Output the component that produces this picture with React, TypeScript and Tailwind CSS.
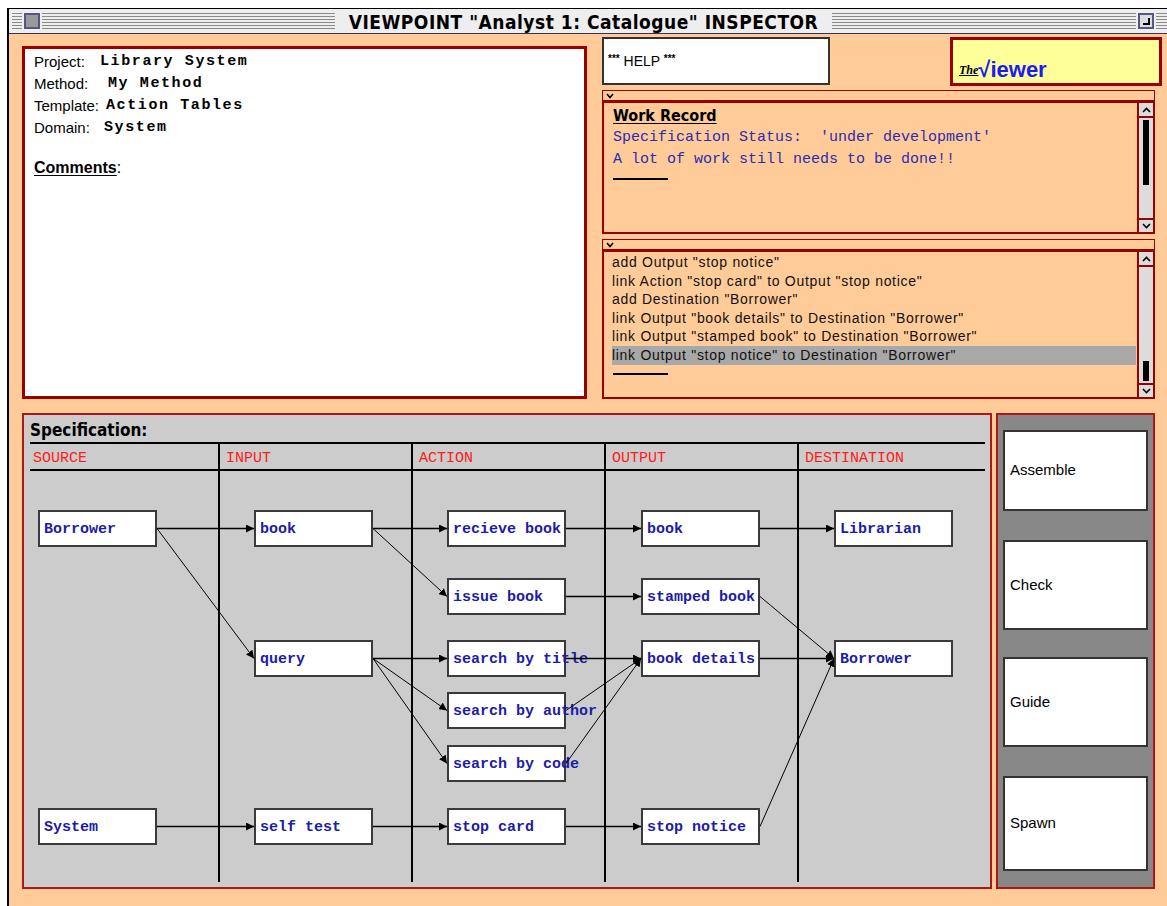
import React from "react";

const sans = "font-['Liberation_Sans',sans-serif]";
const mono = "font-['Liberation_Mono',monospace]";
const chicago = "font-['DejaVu_Sans_Condensed','Liberation_Sans_Narrow',sans-serif]";
const stripes =
  "bg-[repeating-linear-gradient(to_bottom,#8a8a8a_0px,#8a8a8a_1px,#eeeeee_1px,#eeeeee_3px)]";

type Node = { id: string; t: string; c: number; y: number };

const colX = [8, 224, 417, 611, 804];
const NW = 119;
const NH = 37;

const nodes: Node[] = [
  { id: "src1", t: "Borrower", c: 0, y: 68 },
  { id: "in1", t: "book", c: 1, y: 68 },
  { id: "a1", t: "recieve book", c: 2, y: 68 },
  { id: "o1", t: "book", c: 3, y: 68 },
  { id: "d1", t: "Librarian", c: 4, y: 68 },
  { id: "a2", t: "issue book", c: 2, y: 136 },
  { id: "o2", t: "stamped book", c: 3, y: 136 },
  { id: "in2", t: "query", c: 1, y: 198 },
  { id: "a3", t: "search by title", c: 2, y: 198 },
  { id: "o3", t: "book details", c: 3, y: 198 },
  { id: "d2", t: "Borrower", c: 4, y: 198 },
  { id: "a4", t: "search by author", c: 2, y: 250 },
  { id: "a5", t: "search by code", c: 2, y: 303 },
  { id: "src2", t: "System", c: 0, y: 366 },
  { id: "in3", t: "self test", c: 1, y: 366 },
  { id: "a6", t: "stop card", c: 2, y: 366 },
  { id: "o4", t: "stop notice", c: 3, y: 366 },
];

const links: [string, string][] = [
  ["src1", "in1"],
  ["src1", "in2"],
  ["in1", "a1"],
  ["in1", "a2"],
  ["a1", "o1"],
  ["o1", "d1"],
  ["a2", "o2"],
  ["in2", "a3"],
  ["in2", "a4"],
  ["in2", "a5"],
  ["a3", "o3"],
  ["a4", "o3"],
  ["a5", "o3"],
  ["o2", "d2"],
  ["o3", "d2"],
  ["o4", "d2"],
  ["src2", "in3"],
  ["in3", "a6"],
  ["a6", "o4"],
];

const columns = ["SOURCE", "INPUT", "ACTION", "OUTPUT", "DESTINATION"];

const logLines = [
  'add Output "stop notice"',
  'link Action "stop card" to Output "stop notice"',
  'add Destination "Borrower"',
  'link Output "book details" to Destination "Borrower"',
  'link Output "stamped book" to Destination "Borrower"',
  'link Output "stop notice" to Destination "Borrower"',
];

function Caret({ up }: { up?: boolean }) {
  return (
    <svg width="9" height="6" viewBox="0 0 9 6">
      <polyline
        points={up ? "1,5 4.5,1.5 8,5" : "1,1 4.5,4.5 8,1"}
        fill="none"
        stroke="#000"
        strokeWidth="1.6"
      />
    </svg>
  );
}

function Scrollbar({ thumbTop }: { thumbTop: boolean }) {
  return (
    <div className="w-[16px] border-l-2 border-[#990000] bg-[#dcdcdc] flex flex-col">
      <div className="h-[15px] border-b-2 border-[#990000] flex items-center justify-center">
        <Caret up />
      </div>
      <div className="flex-1 flex flex-col items-center py-[2px]">
        {thumbTop ? (
          <div className="w-[6px] h-[65px] bg-black" />
        ) : (
          <div className="w-[6px] h-[20px] bg-black mt-auto" />
        )}
      </div>
      <div className="h-[14px] border-t-2 border-[#990000] flex items-center justify-center">
        <Caret />
      </div>
    </div>
  );
}

function Strip() {
  return (
    <div className="h-[11px] w-[553px] ml-[1px] border border-[#990000] flex items-center pl-[3px]">
      <svg width="8" height="6" viewBox="0 0 8 6">
        <polyline points="1,1 4,4.5 7,1" fill="none" stroke="#000" strokeWidth="1.6" />
      </svg>
    </div>
  );
}

function Diagram() {
  const byId = Object.fromEntries(nodes.map((n) => [n.id, n]));
  return (
    <div className="relative w-[955px] h-[440px] ml-[6px] mt-[2px]">
      <div className="grid grid-cols-[188px_193px_193px_193px_188px] h-full">
        {columns.map((c, i) => (
          <div key={c} className={i ? "border-l-2 border-black" : ""}>
            <div
              className={`h-[29px] border-y-2 border-black pt-[6px] leading-[18px] ${
                i ? "pl-[6px]" : "pl-[3px]"
              } ${mono} text-[15px] text-[#ff1a1a]`}
            >
              {c}
            </div>
          </div>
        ))}
      </div>

      {nodes.map((n) => (
        <div
          key={n.id}
          className={`absolute h-[37px] w-[119px] bg-white border-2 border-[#3a3a3a] flex items-center pl-[4px] pt-[3px] whitespace-nowrap ${mono} text-[15px] font-bold text-[#1c1ca8]`}
          style={{ left: colX[n.c], top: n.y }}
        >
          {n.t}
        </div>
      ))}

      <svg className="absolute inset-0" width="955" height="440">
        <defs>
          <marker
            id="arr"
            viewBox="0 0 8 8"
            refX="8"
            refY="4"
            markerWidth="8"
            markerHeight="8"
            markerUnits="userSpaceOnUse"
            orient="auto"
          >
            <path d="M0,0 L8,4 L0,8 z" fill="#000" />
          </marker>
        </defs>
        {links.map(([a, b]) => {
          const s = byId[a];
          const t = byId[b];
          const x1 = colX[s.c] + NW;
          const y1 = s.y + NH / 2;
          const x2 = colX[t.c];
          const y2 = t.y + NH / 2;
          return (
            <line
              key={a + b}
              x1={x1}
              y1={y1}
              x2={x2}
              y2={y2}
              stroke="#000"
              strokeWidth={y1 === y2 ? 1.6 : 1}
              markerEnd="url(#arr)"
            />
          );
        })}
      </svg>
    </div>
  );
}

export default function App() {
  return (
    <div className={`w-[1167px] h-[906px] bg-white overflow-hidden ${sans}`}>
      <div className="ml-[7px] mt-[8px] w-[1175px] h-[910px] border-l-2 border-t border-black bg-[#ffcc99]">
        {/* title bar */}
        <div className="h-[25px] bg-[#eeeeee] border-b border-[#333366] flex items-center">
          <div className="w-[326px] pl-[3px] flex items-center">
            <div className={`h-[17px] w-[10px] ${stripes}`} />
            <div className="px-[2px]">
              <div className="w-[16px] h-[16px] border-2 border-[#55558a] bg-[#9a9a9a]" />
            </div>
            <div className={`h-[17px] flex-1 ${stripes}`} />
          </div>
          <div className="w-[497px] flex justify-center pt-[2px]">
            <span className={`${chicago} font-bold text-[19px] tracking-[0.5px] text-black leading-none`}>
              VIEWPOINT "Analyst 1: Catalogue" INSPECTOR
            </span>
          </div>
          <div className={`h-[17px] w-[304px] ${stripes}`} />
          <div className="px-[2px]">
            <div className="w-[16px] h-[16px] border-2 border-[#55558a] bg-[#dcdcdc] relative">
              <div className="absolute right-[2px] bottom-[2px] w-[7px] h-[7px] border-r-2 border-b-2 border-black" />
            </div>
          </div>
          <div className={`h-[17px] flex-1 ${stripes}`} />
        </div>

        {/* content */}
        <div className="pl-[13px] pt-[3px]">
          <div className="flex items-start">
            {/* project panel */}
            <div className="mt-[9px] w-[565px] h-[353px] border-[3px] border-[#990000] bg-white pl-[9px] pt-[2px] text-[15px] leading-[22px] text-black">
              <div className="flex">
                <span className="w-[66px]">Project:</span>
                <span className={`${mono} font-bold tracking-[1.6px]`}>Library System</span>
              </div>
              <div className="flex">
                <span className="w-[74px]">Method:</span>
                <span className={`${mono} font-bold tracking-[1.6px]`}>My Method</span>
              </div>
              <div className="flex">
                <span className="w-[72px]">Template:</span>
                <span className={`${mono} font-bold tracking-[1.6px]`}>Action Tables</span>
              </div>
              <div className="flex">
                <span className="w-[70px]">Domain:</span>
                <span className={`${mono} font-bold tracking-[1.6px]`}>System</span>
              </div>
              <div className="mt-[18px] text-[16px]">
                <span className="font-bold underline underline-offset-2">Comments</span>:
              </div>
            </div>

            {/* right column */}
            <div className="ml-[14px] w-[566px]">
              <div className="flex items-start">
                <div className="ml-[1px] w-[228px] h-[48px] border-2 border-[#333] bg-white pl-[4px] pt-[15px] text-[14px] leading-none">
                  <span className="text-[10px] align-top font-bold">***</span> HELP{" "}
                  <span className="text-[10px] align-top font-bold">***</span>
                </div>
                <div className="ml-[120px] w-[212px] h-[49px] border-[3px] border-[#990000] bg-[#ffff99] flex items-end pl-[6px] pb-[1px]">
                  <span className="font-['Liberation_Serif',serif] italic font-bold text-[12px] text-black underline mb-[3px]">
                    The
                  </span>
                  <span className="font-bold text-[22px] leading-[24px] text-[#1a1aff]">√iewer</span>
                </div>
              </div>

              {/* work record */}
              <div className="mt-[4px]">
                <Strip />
                <div className="ml-[1px] w-[553px] h-[133px] border-2 border-[#990000] flex">
                  <div className="flex-1 pl-[9px] pt-[2px] leading-[22px]">
                    <div className={`${chicago} font-bold text-[16px] underline underline-offset-2`}>
                      Work Record
                    </div>
                    <div className={`${mono} text-[15px] text-[#2b2bb0] whitespace-pre`}>
                      Specification Status:  'under development'
                    </div>
                    <div className={`${mono} text-[15px] text-[#2b2bb0]`}>
                      A lot of work still needs to be done!!
                    </div>
                    <div className="mt-[7px] w-[55px] h-[2px] bg-black" />
                  </div>
                  <Scrollbar thumbTop />
                </div>
              </div>

              {/* log */}
              <div className="mt-[5px]">
                <Strip />
                <div className="ml-[1px] w-[553px] h-[149px] border-2 border-[#990000] flex">
                  <div className="flex-1 pl-[8px] pr-[1px] pt-[1px] text-[14px] leading-[18.6px] tracking-[0.7px] text-[#111]">
                    {logLines.map((l, i) => (
                      <div
                        key={i}
                        className={`whitespace-pre ${i === logLines.length - 1 ? "bg-[#a8a8a8]" : ""}`}
                      >
                        {l}
                      </div>
                    ))}
                    <div className="mt-[8px] ml-[1px] w-[55px] h-[2px] bg-black" />
                  </div>
                  <Scrollbar thumbTop={false} />
                </div>
              </div>
            </div>
          </div>

          {/* bottom row */}
          <div className="mt-[14px] flex">
            <div className="w-[970px] h-[476px] border-2 border-[#aa1818] bg-[#cccccc]">
              <div className={`pl-[6px] pt-[5px] ${chicago} font-bold text-[17px] leading-[20px]`}>
                Specification:
              </div>
              <Diagram />
            </div>
            <div className="ml-[4px] w-[159px] h-[476px] border-2 border-[#aa1818] bg-[#888888] pl-[5px] pt-[15px] flex flex-col">
              {[
                ["Assemble", "h-[81px]", ""],
                ["Check", "h-[90px]", "mt-[29px]"],
                ["Guide", "h-[90px]", "mt-[27px]"],
                ["Spawn", "h-[95px]", "mt-[29px]"],
              ].map(([t, h, m]) => (
                <div
                  key={t}
                  className={`${h} ${m} w-[145px] bg-white border-2 border-[#333] flex items-center pl-[5px] text-[15px] text-black`}
                >
                  {t}
                </div>
              ))}
            </div>
          </div>
        </div>
      </div>
    </div>
  );
}
